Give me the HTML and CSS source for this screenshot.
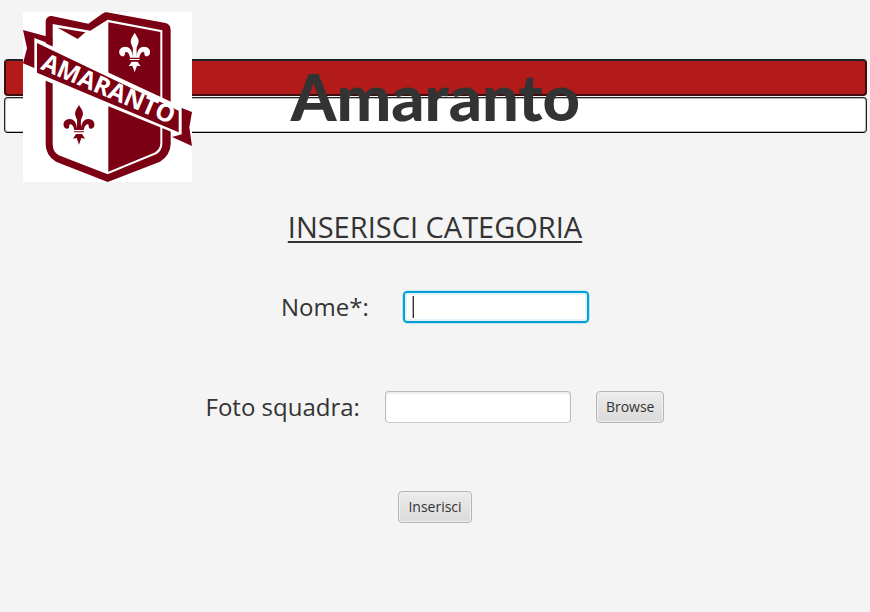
FILE: index.html
```
<!DOCTYPE html>
<html lang="it">
<head>
<meta charset="utf-8">
<meta name="viewport" content="width=device-width, initial-scale=1">
<title>Amaranto</title>
<link rel="stylesheet" href="styles.css">
</head>
<body>
<header class="banner">
  <div class="bars">
    <div class="bar bar-red"></div>
    <div class="bar bar-white"></div>
  </div>
  <svg class="logo" viewBox="69 36 507 510" role="img" aria-label="Amaranto">
    <defs>
      <g id="lily">
        <path d="M0-45C-6-34-12-28-12-18C-10-8-6-4-4 8H4C6-4 10-8 12-18C12-28 6-34 0-45Z"/>
        <path d="M-6 30C-6 10-14-3-28-3C-41-3-48 6-46 17C-44 26-32 31-29 20C-31 14-27 11-22 14C-16 18-15 26-14 30Z"/>
        <path d="M6 30C6 10 14-3 28-3C41-3 48 6 46 17C44 26 32 31 29 20C31 14 27 11 22 14C16 18 15 26 14 30Z"/>
        <path d="M-5 0H5L7 30H-7ZM-15 34H15V37H-15ZM-9 42H9L18 56L7 54L0 74L-7 54L-18 56Z"/>
      </g>
    </defs>
    <path class="paper" d="M69 36H576V546H69Z"/>
    <path class="wine" d="M155 48L265 71L307 41Q316 35 328 38L497 69Q512 73 512 90V432Q511 466 480 485L323 546L168 485Q137 467 137 432V65Q138 48 155 48Z"/>
    <path class="paper" d="M158 72L271 92L323 59L487 91V432Q486 452 470 462L323 523L176 466Q158 455 158 432Z"/>
    <path class="wine" d="M173 83L256 97L233 117Z"/>
    <path class="wine" d="M325 67L481 96V432Q479 449 463 458L325 515Z"/>
    <use href="#lily" class="paper" x="404" y="143"/>
    <use href="#lily" class="wine" x="237" y="360"/>
    <path class="paper" d="M103 114L545 320V408L104 229Z"/>
    <path class="wine" d="M69 90L157 114V134L103 114V204L69 190L81 145Z"/>
    <path class="wine" d="M545 324L576 336L568 382L576 438L516 411L545 403Z"/>
    <path class="wine" d="M111 129L536 332V397L111 218Z"/>
    <text class="logo-text" transform="translate(119 206) rotate(23)">AMARANTO</text>
  </svg>
  <h1 class="brand">Amaranto</h1>
</header>
<main>
  <form class="form">
    <h2 class="title">INSERISCI CATEGORIA</h2>
    <div class="row">
      <label class="label label-name" for="nome">Nome*:</label>
      <div class="entry">
        <input class="field" id="nome" type="text" placeholder=" " autofocus>
        <span class="caret"></span>
      </div>
    </div>
    <div class="row">
      <label class="label" for="foto">Foto squadra:</label>
      <input class="field" id="foto" type="text">
      <button class="button" type="button">Browse</button>
    </div>
    <div class="row">
      <button class="button" type="button">Inserisci</button>
    </div>
  </form>
</main>
</body>
</html>
```
FILE: styles.css
```
* {
  box-sizing: border-box;
}

body {
  margin: 0;
  background: #f4f4f4;
  color: #333;
  font-family: "Open Sans", "Noto Sans", sans-serif;
}

.banner {
  display: grid;
  padding: 12px 3px 0 4px;
}

.banner > * {
  grid-area: 1 / 1;
}

.bars {
  display: grid;
  align-self: start;
  gap: 1px;
  margin-top: 47px;
}

.bar {
  height: 37px;
  border: 2px solid #3d0d0d;
  border-radius: 4px;
}

.bar-red {
  border-top-color: #222;
  background: #b31b1b;
}

.bar-white {
  height: 36px;
  border: 1px solid #222;
  border-bottom-color: #000;
  background: #fff;
  box-shadow: inset 0 0 0 1px #bbb;
}

.logo {
  display: block;
  width: 169px;
  height: 170px;
  margin-left: 19px;
}

.paper {
  fill: #fff;
}

.wine {
  fill: #7b0013;
}

.logo-text {
  fill: #fff;
  font: 700 73px "Open Sans", sans-serif;
}

.brand {
  align-self: start;
  justify-self: center;
  margin: 44px 0 0;
  font: 900 65px/80px Lato, sans-serif;
}

.form {
  display: flex;
  flex-direction: column;
  align-items: center;
}

.title {
  margin: 25px 0 23px;
  font-size: 29px;
  font-weight: 400;
  line-height: 40px;
  text-decoration: underline;
  text-decoration-thickness: 2px;
  text-underline-offset: 3px;
}

.row {
  display: flex;
  align-items: center;
  gap: 25px;
  height: 32px;
  margin-top: 21px;
}

.row + .row {
  margin-top: 68px;
}

.label {
  font-size: 24px;
  line-height: 32px;
}

.label-name {
  min-width: 97px;
}

.entry {
  position: relative;
  display: flex;
}

.field {
  width: 186px;
  height: 32px;
  padding: 3px 9px;
  border: 1px solid #bababa;
  border-bottom-color: #ccc;
  border-radius: 4px;
  background: #fff;
  box-shadow: inset 0 2px 2px #ededed;
  color: #333;
  font: 18px "Open Sans", sans-serif;
}

.field:focus {
  border: 2px solid #039ed3;
  outline: 1px solid #c4e5f0;
  box-shadow: inset 0 0 0 2px #e3f3f9;
}

.field:focus:placeholder-shown {
  caret-color: transparent;
}

/* Steady caret shown while the focused field is still empty */
.caret {
  position: absolute;
  top: 5px;
  left: 10px;
  display: none;
  width: 1px;
  height: 22px;
  background: #333;
  box-shadow: -1px 0 #aaa;
  pointer-events: none;
}

.field:focus:placeholder-shown + .caret {
  display: block;
}

.button {
  height: 32px;
  padding: 0 9px 2px;
  border: 1px solid #b5b5b5;
  border-radius: 4px;
  background: linear-gradient(#ececec, #dadada);
  box-shadow: inset 0 0 0 1px #f0f0f0;
  color: #333;
  font: 14px "Open Sans", sans-serif;
}
```
